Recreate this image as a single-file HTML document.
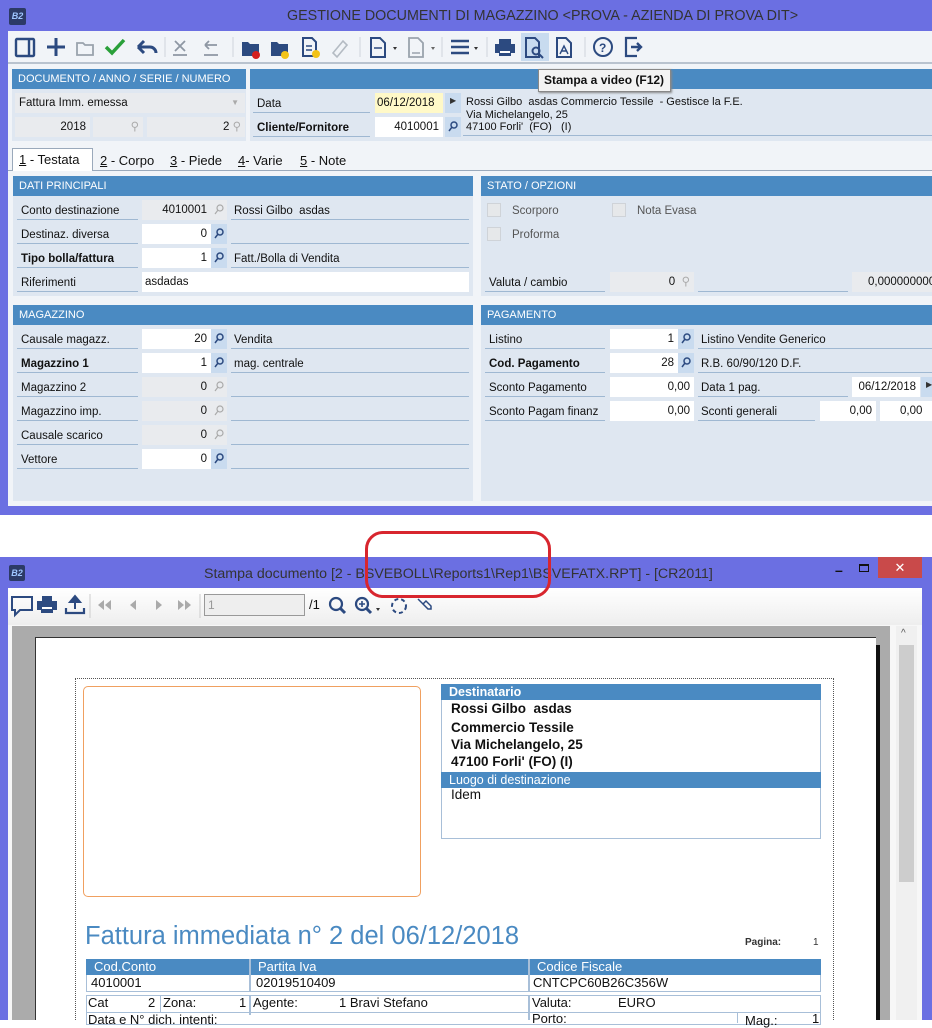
<!DOCTYPE html>
<html><head><meta charset="utf-8"><style>
*{margin:0;padding:0;box-sizing:border-box}
body{width:932px;height:1020px;overflow:hidden;background:#fff;font-family:"Liberation Sans",sans-serif;font-size:12px;color:#111;position:relative}
.a{position:absolute}
.hdr{position:absolute;background:#4a8ac2;color:#fff;font-size:11px;padding:3px 6px;height:20px;line-height:14px}
.pan{position:absolute;background:#dfe7f1}
.lb{position:absolute;height:20px;line-height:22px;padding-left:4px;border-bottom:1px solid #9fb8d2;font-size:11.5px}
.b{font-weight:bold}
.f{position:absolute;height:20px;line-height:20px;background:#fff;text-align:right;padding-right:4px;font-size:11.5px}
.g{background:#e9ebee}
.btn{position:absolute;width:16px;height:20px;background:#c9dbef}
.btn.g{background:#e9ebee}
.d{position:absolute;height:20px;line-height:22px;padding-left:3px;border-bottom:1px solid #9fb8d2;font-size:11.5px}
.btn svg{position:absolute;left:3px;top:4px}
.ti{position:absolute;font-size:14.3px;color:#333}
.rh{position:absolute;background:#4a8ac2;color:#fff;font-size:13px;height:16px;line-height:16px}
.rv{position:absolute;font-size:13px;color:#111}
</style></head><body>
<!-- top window -->
<div class="a" style="left:0;top:0;width:932px;height:515px;background:#6b6fe2"></div>
<div class="a" style="left:9px;top:8px;width:17px;height:17px;background:#2c3a66;border-radius:2px;color:#9fc6ff;font-size:9px;font-weight:bold;line-height:17px;text-align:center;font-style:italic">B2</div>
<div class="ti" style="left:287px;top:8px">GESTIONE DOCUMENTI DI MAGAZZINO &lt;PROVA - AZIENDA DI PROVA DIT&gt;</div>
<div class="a" style="left:8px;top:31px;width:924px;height:475px;background:#f1f4f8"></div>
<!-- toolbar -->
<div class="a" style="left:8px;top:62px;width:924px;height:2px;background:#b9c3cf"></div>
<div class="a" style="left:521px;top:33px;width:28px;height:28px;background:#c8dbef"></div>
<svg class="a" style="left:0;top:33px" width="660" height="28" viewBox="0 0 660 28" fill="none" stroke-width="2.4">
<rect x="16" y="6" width="18" height="17" stroke="#2c4a80" rx="1"/><line x1="29" y1="6" x2="29" y2="23" stroke="#2c4a80"/>
<path d="M56 5v18M47 14h18" stroke="#2c4a80" stroke-width="3"/>
<path d="M77 10h6l2 2h8v10H77z" stroke="#9aa3ad" stroke-width="1.8"/>
<path d="M106 14l6 6 12-13" stroke="#2aa03a" stroke-width="3.5"/>
<path d="M138 14h12a6 6 0 0 1 6 6M138 14l6-6M138 14l6 6" stroke="#2c4a80" stroke-width="3"/>
<line x1="165" y1="4" x2="165" y2="24" stroke="#cfd5dc" stroke-width="1"/>
<path d="M175 8l10 10M185 8l-10 10M173 22h14" stroke="#8e97a3" stroke-width="1.8"/>
<path d="M205 12h12M205 12l4-4M205 12l4 4M204 22h14" stroke="#8e97a3" stroke-width="1.8"/>
<line x1="233" y1="4" x2="233" y2="24" stroke="#cfd5dc" stroke-width="1"/>
<path d="M242 9h6l2 2h9v12h-17z" fill="#2c4a80" stroke="none"/><circle cx="256" cy="22" r="4" fill="#d21e1e" stroke="none"/>
<path d="M271 9h6l2 2h9v12h-17z" fill="#2c4a80" stroke="none"/><circle cx="285" cy="22" r="4" fill="#f2c318" stroke="none"/>
<path d="M303 5h9l4 4v14h-13z" stroke="#2c4a80" stroke-width="2"/><path d="M306 13h6M306 17h6" stroke="#2c4a80" stroke-width="1.5"/><circle cx="316" cy="21" r="4" fill="#f2c318" stroke="none"/>
<path d="M333 20l10-12 4 4-10 12z" stroke="#b4bbc3" stroke-width="1.6"/>
<line x1="360" y1="4" x2="360" y2="24" stroke="#cfd5dc" stroke-width="1"/>
<path d="M371 5h9l5 5v14h-14z" stroke="#2c4a80" stroke-width="2"/><path d="M374 15h8" stroke="#2c4a80" stroke-width="1.5"/><path d="M393 14l2 3 2-3z" fill="#333" stroke="none"/>
<path d="M409 5h9l5 5v14h-14z" stroke="#9aa3ad" stroke-width="1.8"/><path d="M412 20h8" stroke="#9aa3ad" stroke-width="1.5"/><path d="M431 14l2 3 2-3z" fill="#666" stroke="none"/>
<line x1="442" y1="4" x2="442" y2="24" stroke="#cfd5dc" stroke-width="1"/>
<path d="M451 8h18M451 14h18M451 20h18" stroke="#2c4a80" stroke-width="2.6"/><path d="M474 14l2 3 2-3z" fill="#333" stroke="none"/>
<line x1="487" y1="4" x2="487" y2="24" stroke="#cfd5dc" stroke-width="1"/>
<path d="M499 6h12v5h-12z M495 11h20v9h-4v3h-12v-3h-4z" fill="#2c4a80" stroke="none"/><rect x="500" y="18" width="10" height="2" fill="#fff" stroke="none"/>
<path d="M526 5h9l4 4v15h-13z" stroke="#2c4a80" stroke-width="2"/><circle cx="536" cy="18" r="3.5" stroke="#2c4a80" stroke-width="2"/><path d="M539 21l4 4" stroke="#2c4a80" stroke-width="2"/>
<path d="M557 5h9l5 5v14h-14z" stroke="#2c4a80" stroke-width="2"/><path d="M560 21l4-8 4 8M561 18h6" stroke="#2c4a80" stroke-width="1.4"/>
<line x1="585" y1="4" x2="585" y2="24" stroke="#cfd5dc" stroke-width="1"/>
<circle cx="603" cy="14" r="9" stroke="#2c4a80" stroke-width="2"/><text x="599" y="19" font-size="12" font-weight="bold" fill="#2c4a80" stroke="none" font-family="Liberation Sans">?</text>
<path d="M637 5h-11v18h11" stroke="#2c4a80" stroke-width="2.2"/><path d="M631 14h10M637 10l4 4-4 4" stroke="#2c4a80" stroke-width="2.4"/>
</svg>
<!-- header area -->
<div class="hdr" style="left:12px;top:69px;width:234px">DOCUMENTO / ANNO / SERIE / NUMERO</div>
<div class="hdr" style="left:250px;top:69px;width:682px"></div>
<div class="pan" style="left:12px;top:89px;width:234px;height:52px"></div>
<div class="pan" style="left:250px;top:89px;width:682px;height:52px"></div>
<div class="f g" style="left:15px;top:93px;width:230px;text-align:left;padding-left:4px">Fattura Imm. emessa<span style="position:absolute;right:6px;color:#aaa;font-size:8px">▼</span></div>
<div class="f g" style="left:15px;top:117px;width:75px">2018</div>
<div class="f g" style="left:93px;top:117px;width:50px;color:#aaa">⚲</div>
<div class="f g" style="left:147px;top:117px;width:98px">2 <span style="color:#aaa">⚲</span></div>
<div class="lb" style="left:253px;top:93px;width:117px">Data</div>
<div class="lb b" style="left:253px;top:117px;width:117px">Cliente/Fornitore</div>
<div class="f" style="left:375px;top:93px;width:68px;background:#fff9c8;text-align:left;padding-left:2px">06/12/2018</div>
<div class="btn" style="left:445px;top:93px"><span style="position:absolute;left:5px;top:3px;font-size:8px;color:#333">▶</span></div>
<div class="f" style="left:375px;top:117px;width:68px">4010001</div>
<div class="btn" style="left:445px;top:117px"><svg width="10" height="12"><circle cx="6" cy="4" r="3" fill="none" stroke="#2c4a80" stroke-width="1.5"/><path d="M4 6L1 10" stroke="#2c4a80" stroke-width="1.5"/></svg></div>
<div class="a" style="left:463px;top:92px;width:469px;height:44px;border-bottom:1px solid #9fb8d2"></div>
<div class="a" style="left:466px;top:96px;font-size:11px;line-height:12.5px">Rossi Gilbo&nbsp; asdas Commercio Tessile&nbsp; - Gestisce la F.E.<br>Via Michelangelo, 25<br>47100 Forli'&nbsp; (FO)&nbsp;&nbsp; (I)</div>
<!-- tooltip -->
<div class="a" style="left:538px;top:69px;width:133px;height:23px;background:#f3f3f3;border:1px solid #888;box-shadow:1px 1px 2px #888;font-weight:bold;font-size:12px;line-height:21px;padding-left:5px">Stampa a video (F12)</div>
<!-- tabs -->
<div class="a" style="left:8px;top:170px;width:924px;height:1px;background:#9aa9bb"></div>
<div class="a" style="left:12px;top:148px;width:81px;height:23px;background:#fff;border:1px solid #9aa9bb;border-bottom:none"></div>
<div class="a" style="left:19px;top:152px;font-size:13px"><u>1</u> - Testata</div>
<div class="a" style="left:100px;top:153px;font-size:13px"><u>2</u> - Corpo</div>
<div class="a" style="left:170px;top:153px;font-size:13px"><u>3</u> - Piede</div>
<div class="a" style="left:238px;top:153px;font-size:13px"><u>4</u>- Varie</div>
<div class="a" style="left:300px;top:153px;font-size:13px"><u>5</u> - Note</div>
<!-- left panels -->
<div class="hdr" style="left:13px;top:176px;width:460px">DATI PRINCIPALI</div>
<div class="pan" style="left:13px;top:196px;width:460px;height:100px"></div>
<div class="hdr" style="left:481px;top:176px;width:451px">STATO / OPZIONI</div>
<div class="pan" style="left:481px;top:196px;width:451px;height:100px"></div>
<div class="hdr" style="left:13px;top:305px;width:460px">MAGAZZINO</div>
<div class="pan" style="left:13px;top:325px;width:460px;height:176px"></div>
<div class="hdr" style="left:481px;top:305px;width:451px">PAGAMENTO</div>
<div class="pan" style="left:481px;top:325px;width:451px;height:176px"></div>

<div class="lb" style="left:17px;top:200px;width:121px">Conto destinazione</div>
<div class="f g" style="left:142px;top:200px;width:69px">4010001</div><div class="btn g" style="left:211px;top:200px"><svg width="10" height="12"><circle cx="6" cy="4" r="3" fill="none" stroke="#aaa" stroke-width="1.2"/><path d="M4 6L1 10" stroke="#aaa" stroke-width="1.2"/></svg></div>
<div class="d" style="left:231px;top:200px;width:238px">Rossi Gilbo&nbsp; asdas</div>
<div class="lb" style="left:17px;top:224px;width:121px">Destinaz. diversa</div>
<div class="f" style="left:142px;top:224px;width:69px">0</div><div class="btn" style="left:211px;top:224px"><svg width="10" height="12"><circle cx="6" cy="4" r="3" fill="none" stroke="#2c4a80" stroke-width="1.5"/><path d="M4 6L1 10" stroke="#2c4a80" stroke-width="1.5"/></svg></div>
<div class="d" style="left:231px;top:224px;width:238px"></div>
<div class="lb b" style="left:17px;top:248px;width:121px">Tipo bolla/fattura</div>
<div class="f" style="left:142px;top:248px;width:69px">1</div><div class="btn" style="left:211px;top:248px"><svg width="10" height="12"><circle cx="6" cy="4" r="3" fill="none" stroke="#2c4a80" stroke-width="1.5"/><path d="M4 6L1 10" stroke="#2c4a80" stroke-width="1.5"/></svg></div>
<div class="d" style="left:231px;top:248px;width:238px">Fatt./Bolla di Vendita</div>
<div class="lb" style="left:17px;top:272px;width:121px">Riferimenti</div>
<div class="f" style="left:142px;top:272px;width:327px;text-align:left;padding-left:3px">asdadas</div>

<div class="lb" style="left:17px;top:329px;width:121px">Causale magazz.</div>
<div class="f" style="left:142px;top:329px;width:69px">20</div><div class="btn" style="left:211px;top:329px"><svg width="10" height="12"><circle cx="6" cy="4" r="3" fill="none" stroke="#2c4a80" stroke-width="1.5"/><path d="M4 6L1 10" stroke="#2c4a80" stroke-width="1.5"/></svg></div>
<div class="d" style="left:231px;top:329px;width:238px">Vendita</div>
<div class="lb b" style="left:17px;top:353px;width:121px">Magazzino 1</div>
<div class="f" style="left:142px;top:353px;width:69px">1</div><div class="btn" style="left:211px;top:353px"><svg width="10" height="12"><circle cx="6" cy="4" r="3" fill="none" stroke="#2c4a80" stroke-width="1.5"/><path d="M4 6L1 10" stroke="#2c4a80" stroke-width="1.5"/></svg></div>
<div class="d" style="left:231px;top:353px;width:238px">mag. centrale</div>
<div class="lb" style="left:17px;top:377px;width:121px">Magazzino 2</div>
<div class="f g" style="left:142px;top:377px;width:69px">0</div><div class="btn g" style="left:211px;top:377px"><svg width="10" height="12"><circle cx="6" cy="4" r="3" fill="none" stroke="#aaa" stroke-width="1.2"/><path d="M4 6L1 10" stroke="#aaa" stroke-width="1.2"/></svg></div>
<div class="d" style="left:231px;top:377px;width:238px"></div>
<div class="lb" style="left:17px;top:401px;width:121px">Magazzino imp.</div>
<div class="f g" style="left:142px;top:401px;width:69px">0</div><div class="btn g" style="left:211px;top:401px"><svg width="10" height="12"><circle cx="6" cy="4" r="3" fill="none" stroke="#aaa" stroke-width="1.2"/><path d="M4 6L1 10" stroke="#aaa" stroke-width="1.2"/></svg></div>
<div class="d" style="left:231px;top:401px;width:238px"></div>
<div class="lb" style="left:17px;top:425px;width:121px">Causale scarico</div>
<div class="f g" style="left:142px;top:425px;width:69px">0</div><div class="btn g" style="left:211px;top:425px"><svg width="10" height="12"><circle cx="6" cy="4" r="3" fill="none" stroke="#aaa" stroke-width="1.2"/><path d="M4 6L1 10" stroke="#aaa" stroke-width="1.2"/></svg></div>
<div class="d" style="left:231px;top:425px;width:238px"></div>
<div class="lb" style="left:17px;top:449px;width:121px">Vettore</div>
<div class="f" style="left:142px;top:449px;width:69px">0</div><div class="btn" style="left:211px;top:449px"><svg width="10" height="12"><circle cx="6" cy="4" r="3" fill="none" stroke="#2c4a80" stroke-width="1.5"/><path d="M4 6L1 10" stroke="#2c4a80" stroke-width="1.5"/></svg></div>
<div class="d" style="left:231px;top:449px;width:238px"></div>

<!-- stato -->
<div class="a" style="left:487px;top:203px;width:14px;height:14px;background:#e6e8ea;border:1px solid #cfd3d8"></div>
<div class="a" style="left:512px;top:205px;font-size:11.5px;color:#555">Scorporo</div>
<div class="a" style="left:612px;top:203px;width:14px;height:14px;background:#e6e8ea;border:1px solid #cfd3d8"></div>
<div class="a" style="left:637px;top:205px;font-size:11.5px;color:#555">Nota Evasa</div>
<div class="a" style="left:487px;top:227px;width:14px;height:14px;background:#e6e8ea;border:1px solid #cfd3d8"></div>
<div class="a" style="left:512px;top:229px;font-size:11.5px;color:#555">Proforma</div>
<div class="lb" style="left:485px;top:272px;width:120px">Valuta / cambio</div>
<div class="f g" style="left:610px;top:272px;width:84px">0 <span style="color:#aaa">&nbsp;⚲</span></div>
<div class="d" style="left:698px;top:272px;width:150px"></div>
<div class="f g" style="left:852px;top:272px;width:80px;text-align:left;padding-left:16px">0,000000000</div>

<!-- pagamento -->
<div class="lb" style="left:485px;top:329px;width:120px">Listino</div>
<div class="f" style="left:610px;top:329px;width:68px">1</div><div class="btn" style="left:678px;top:329px"><svg width="10" height="12"><circle cx="6" cy="4" r="3" fill="none" stroke="#2c4a80" stroke-width="1.5"/><path d="M4 6L1 10" stroke="#2c4a80" stroke-width="1.5"/></svg></div>
<div class="d" style="left:698px;top:329px;width:234px">Listino Vendite Generico</div>
<div class="lb b" style="left:485px;top:353px;width:120px">Cod. Pagamento</div>
<div class="f" style="left:610px;top:353px;width:68px">28</div><div class="btn" style="left:678px;top:353px"><svg width="10" height="12"><circle cx="6" cy="4" r="3" fill="none" stroke="#2c4a80" stroke-width="1.5"/><path d="M4 6L1 10" stroke="#2c4a80" stroke-width="1.5"/></svg></div>
<div class="d" style="left:698px;top:353px;width:234px">R.B. 60/90/120 D.F.</div>
<div class="lb" style="left:485px;top:377px;width:120px">Sconto Pagamento</div>
<div class="f" style="left:610px;top:377px;width:84px">0,00</div>
<div class="d" style="left:698px;top:377px;width:150px">Data 1 pag.</div>
<div class="f" style="left:852px;top:377px;width:68px">06/12/2018</div>
<div class="btn" style="left:921px;top:377px"><span style="position:absolute;left:5px;top:3px;font-size:8px;color:#333">▶</span></div>
<div class="lb" style="left:485px;top:401px;width:120px">Sconto Pagam finanz</div>
<div class="f" style="left:610px;top:401px;width:84px">0,00</div>
<div class="d" style="left:698px;top:401px;width:117px">Sconti generali</div>
<div class="f" style="left:820px;top:401px;width:56px">0,00</div>
<div class="f" style="left:880px;top:401px;width:52px;text-align:left;padding-left:20px">0,00</div>

<!-- lower window -->
<div class="a" style="left:0;top:557px;width:932px;height:463px;background:#6b6fe2"></div>
<div class="a" style="left:9px;top:565px;width:16px;height:16px;background:#2c3a66;border-radius:2px;color:#9fc6ff;font-size:9px;font-weight:bold;line-height:16px;text-align:center;font-style:italic">B2</div>
<div class="ti" style="left:204px;top:566px;font-size:14.2px">Stampa documento [2 - BSVEBOLL\Reports1\Rep1\BSVEFATX.RPT] - [CR2011]</div>
<div class="a" style="left:835px;top:562px;font-size:14px;color:#111;font-weight:bold">–</div>
<div class="a" style="left:859px;top:564px;width:10px;height:8px;border:1px solid #111;border-top-width:2px"></div>
<div class="a" style="left:878px;top:557px;width:44px;height:21px;background:#c94a4a;color:#fff;text-align:center;line-height:21px;font-size:13px">✕</div>
<div class="a" style="left:8px;top:588px;width:914px;height:432px;background:#f7f7f7"></div>
<div class="a" style="left:8px;top:588px;width:914px;height:37px;background:linear-gradient(#fff,#eee)"></div>
<svg class="a" style="left:0;top:588px" width="440" height="37" fill="none">
<path d="M12 9h20v13h-12l-5 5v-5h-3z" stroke="#2c4a80" stroke-width="2"/>
<path d="M42 8h10v5h-10z M37 13h20v9h-4v3h-12v-3h-4z" fill="#2c4a80"/><rect x="42" y="19" width="10" height="2" fill="#fff"/>
<path d="M66 20v5h18v-5" stroke="#2c4a80" stroke-width="2.2"/><path d="M75 21v-10M70 14l5-6 5 6z" fill="#2c4a80" stroke="#2c4a80" stroke-width="2"/>
<line x1="90" y1="6" x2="90" y2="30" stroke="#ccc"/>
<path d="M104 12l-6 5 6 5zM111 12l-6 5 6 5z" fill="#aaa"/>
<path d="M136 12l-6 5 6 5z" fill="#aaa"/>
<path d="M156 12l6 5-6 5z" fill="#aaa"/>
<path d="M178 12l6 5-6 5zM185 12l6 5-6 5z" fill="#aaa"/>
<line x1="200" y1="6" x2="200" y2="30" stroke="#ccc"/>
<circle cx="336" cy="16" r="6" stroke="#2c4a80" stroke-width="2.2"/><path d="M340 20l5 5" stroke="#2c4a80" stroke-width="3"/>
<circle cx="362" cy="16" r="6" stroke="#2c4a80" stroke-width="2.2"/><path d="M366 20l5 5" stroke="#2c4a80" stroke-width="3"/><path d="M359 16h6M362 13v6" stroke="#2c4a80" stroke-width="1.6"/><path d="M376 20l2 3 2-3z" fill="#333"/>
<circle cx="399" cy="18" r="7" stroke="#2c4a80" stroke-width="2" stroke-dasharray="4 3"/>
<path d="M418 11l5 5 3-3 5 5v3h-3l-5-5 3-3" stroke="#2c4a80" stroke-width="1.5"/>
</svg>
<div class="a" style="left:204px;top:594px;width:101px;height:22px;background:#eee;border:1px solid #999;color:#999;font-size:12px;line-height:20px;padding-left:3px">1</div>
<div class="a" style="left:309px;top:597px;font-size:13px">/1</div>
<div class="a" style="left:12px;top:626px;width:878px;height:394px;background:#ababab"></div>
<div class="a" style="left:35px;top:637px;width:841px;height:383px;background:#fff;border-left:1px solid #333;border-top:1px solid #333"></div>
<div class="a" style="left:876px;top:645px;width:4px;height:375px;background:#111"></div>
<div class="a" style="left:896px;top:626px;width:21px;height:394px;background:#f0f0f0"></div>
<div class="a" style="left:899px;top:645px;width:15px;height:237px;background:#cdcdcd"></div>
<div class="a" style="left:901px;top:628px;font-size:10px;color:#555">^</div>

<!-- report -->
<div class="a" style="left:75px;top:678px;width:759px;height:342px;border:1px dotted #555;border-bottom:none"></div>
<div class="a" style="left:83px;top:686px;width:338px;height:211px;border:1px solid #f0a060;border-radius:5px"></div>
<div class="a" style="left:441px;top:684px;width:380px;height:155px;border:1px solid #a8bfd8"></div>
<div class="rh" style="left:441px;top:684px;width:380px;padding-left:8px;font-weight:bold;font-size:12.5px">Destinatario</div>
<div class="a" style="left:451px;top:700px;font-weight:bold;font-size:13.5px;line-height:17px">Rossi Gilbo&nbsp; asdas</div>
<div class="a" style="left:451px;top:719px;font-weight:bold;font-size:13.5px;line-height:17px">Commercio Tessile<br>Via Michelangelo, 25<br>47100 Forli' (FO) (I)</div>
<div class="rh" style="left:441px;top:772px;width:380px;padding-left:8px;font-size:12.5px">Luogo di destinazione</div>
<div class="a" style="left:451px;top:787px;font-size:13.5px">Idem</div>
<div class="a" style="left:85px;top:922px;font-size:25.5px;color:#4a8ac2">Fattura immediata n° 2 del 06/12/2018</div>
<div class="a" style="left:745px;top:937px;font-size:10px;font-weight:bold;color:#333">Pagina:</div>
<div class="a" style="left:813px;top:937px;font-size:10px;color:#333">1</div>
<div class="a" style="left:86px;top:959px;width:735px;height:33px;border:1px solid #a8bfd8"></div>
<div class="rh" style="left:86px;top:959px;width:163px;padding-left:8px">Cod.Conto</div>
<div class="rh" style="left:250px;top:959px;width:278px;padding-left:8px">Partita Iva</div>
<div class="rh" style="left:529px;top:959px;width:292px;padding-left:8px">Codice Fiscale</div>
<div class="a" style="left:249px;top:959px;width:2px;height:33px;background:#a8bfd8"></div>
<div class="a" style="left:528px;top:959px;width:2px;height:33px;background:#a8bfd8"></div>
<div class="rv" style="left:91px;top:975px">4010001</div>
<div class="rv" style="left:256px;top:975px">02019510409</div>
<div class="rv" style="left:533px;top:975px">CNTCPC60B26C356W</div>
<div class="a" style="left:86px;top:995px;width:735px;height:30px;border:1px solid #a8bfd8"></div>
<div class="a" style="left:86px;top:1012px;width:735px;height:1px;background:#a8bfd8"></div>
<div class="a" style="left:160px;top:995px;width:1px;height:17px;background:#a8bfd8"></div>
<div class="a" style="left:249px;top:995px;width:2px;height:20px;background:#a8bfd8"></div>
<div class="a" style="left:528px;top:995px;width:2px;height:25px;background:#a8bfd8"></div>
<div class="a" style="left:737px;top:1013px;width:1px;height:10px;background:#a8bfd8"></div>
<div class="rv" style="left:88px;top:995px">Cat</div><div class="rv" style="left:148px;top:995px">2</div>
<div class="rv" style="left:163px;top:995px">Zona:</div><div class="rv" style="left:239px;top:995px">1</div>
<div class="rv" style="left:253px;top:995px">Agente:</div><div class="rv" style="left:339px;top:995px">1 Bravi Stefano</div>
<div class="rv" style="left:532px;top:995px">Valuta:</div><div class="rv" style="left:618px;top:995px">EURO</div>
<div class="rv" style="left:88px;top:1012px">Data e N° dich. intenti:</div>
<div class="rv" style="left:532px;top:1011px">Porto:</div>
<div class="rv" style="left:745px;top:1013px">Mag.:</div><div class="rv" style="left:812px;top:1011px">1</div>

<!-- red annotation -->
<div class="a" style="left:365px;top:531px;width:186px;height:67px;border:3px solid #d8262e;border-radius:18px"></div>
</body></html>
